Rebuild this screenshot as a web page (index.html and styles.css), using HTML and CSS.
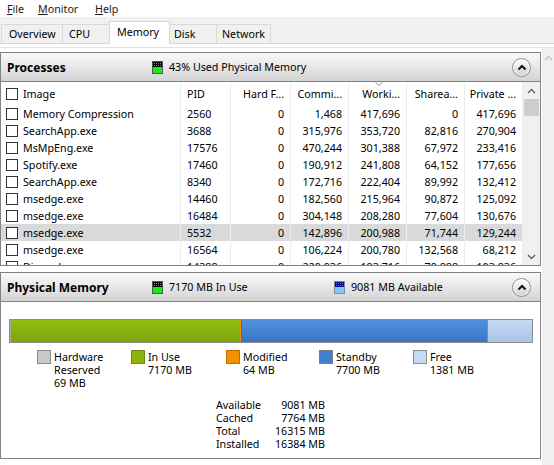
FILE: index.html
```html
<!DOCTYPE html>
<html>
<head>
<meta charset="utf-8">
<link rel="stylesheet" href="styles.css">
</head>
<body>
<div class="menubar">
  <span class="mi mi-file"><u>F</u>ile</span>
  <span class="mi mi-mon"><u>M</u>onitor</span>
  <span class="mi"><u>H</u>elp</span>
</div>
<div class="tabstrip">
  <div class="tab t-ov">Overview</div>
  <div class="tab t-cpu">CPU</div>
  <div class="tab t-mem sel">Memory</div>
  <div class="tab t-disk">Disk</div>
  <div class="tab t-net">Network</div>
</div>
<div class="main">
  <div class="frame">
    <div class="pane">
      <section class="panel">
        <header class="phead">
          <div class="ptitle">Processes</div>
          <svg class="icon" width="11" height="13" viewBox="0 0 11 13">
            <rect x="0" y="0" width="11" height="13" fill="#555"/>
            <rect x="1" y="1" width="9" height="5" fill="#000"/>
            <g fill="#19c819">
              <rect x="2" y="2" width="1" height="1"/><rect x="4" y="2" width="1" height="1"/><rect x="6" y="2" width="1" height="1"/><rect x="8" y="2" width="1" height="1"/>
              <rect x="2" y="4" width="1" height="1"/><rect x="4" y="4" width="1" height="1"/><rect x="6" y="4" width="1" height="1"/><rect x="8" y="4" width="1" height="1"/>
            </g>
            <rect x="1" y="6" width="9" height="6" fill="#1ee81e"/>
          </svg>
          <span class="hlabel">43% Used Physical Memory</span>
          <span class="collapse"><svg width="10" height="7" viewBox="0 0 10 7"><polyline points="1.5,5.5 5,2 8.5,5.5" fill="none" stroke="#111" stroke-width="2"/></svg></span>
        </header>
        <div class="tablewrap">
          <div class="table">
            <div class="hrow">
              <div class="c img"><span class="cb"></span>Image</div>
              <div class="c pid">PID</div>
              <div class="c num">Hard F...</div>
              <div class="c num">Commi...</div>
              <div class="c num sorted">Worki...<svg class="sortarrow" width="8" height="4" viewBox="0 0 8 4"><polyline points="0.5,0.5 4,3.5 7.5,0.5" fill="none" stroke="#9a9a9a" stroke-width="1"/></svg></div>
              <div class="c num">Sharea...</div>
              <div class="c num">Private ...</div>
            </div>
            <div class="rows">
              <div class="prow"><div class="c img"><span class="cb"></span>Memory Compression</div><div class="c pid">2560</div><div class="c num">0</div><div class="c num">1,468</div><div class="c num">417,696</div><div class="c num">0</div><div class="c num">417,696</div></div>
              <div class="prow"><div class="c img"><span class="cb"></span>SearchApp.exe</div><div class="c pid">3688</div><div class="c num">0</div><div class="c num">315,976</div><div class="c num">353,720</div><div class="c num">82,816</div><div class="c num">270,904</div></div>
              <div class="prow"><div class="c img"><span class="cb"></span>MsMpEng.exe</div><div class="c pid">17576</div><div class="c num">0</div><div class="c num">470,244</div><div class="c num">301,388</div><div class="c num">67,972</div><div class="c num">233,416</div></div>
              <div class="prow"><div class="c img"><span class="cb"></span>Spotify.exe</div><div class="c pid">17460</div><div class="c num">0</div><div class="c num">190,912</div><div class="c num">241,808</div><div class="c num">64,152</div><div class="c num">177,656</div></div>
              <div class="prow"><div class="c img"><span class="cb"></span>SearchApp.exe</div><div class="c pid">8340</div><div class="c num">0</div><div class="c num">172,716</div><div class="c num">222,404</div><div class="c num">89,992</div><div class="c num">132,412</div></div>
              <div class="prow"><div class="c img"><span class="cb"></span>msedge.exe</div><div class="c pid">14460</div><div class="c num">0</div><div class="c num">182,560</div><div class="c num">215,964</div><div class="c num">90,872</div><div class="c num">125,092</div></div>
              <div class="prow"><div class="c img"><span class="cb"></span>msedge.exe</div><div class="c pid">16484</div><div class="c num">0</div><div class="c num">304,148</div><div class="c num">208,280</div><div class="c num">77,604</div><div class="c num">130,676</div></div>
              <div class="prow hl"><div class="c img"><span class="cb"></span>msedge.exe</div><div class="c pid">5532</div><div class="c num">0</div><div class="c num">142,896</div><div class="c num">200,988</div><div class="c num">71,744</div><div class="c num">129,244</div></div>
              <div class="prow"><div class="c img"><span class="cb"></span>msedge.exe</div><div class="c pid">16564</div><div class="c num">0</div><div class="c num">106,224</div><div class="c num">200,780</div><div class="c num">132,568</div><div class="c num">68,212</div></div>
              <div class="prow"><div class="c img"><span class="cb"></span>Discord.exe</div><div class="c pid">14388</div><div class="c num">0</div><div class="c num">229,936</div><div class="c num">193,716</div><div class="c num">79,888</div><div class="c num">103,836</div></div>
            </div>
          </div>
          <div class="vscroll">
            <div class="arrowbox"><svg width="9" height="6" viewBox="0 0 9 6"><polyline points="1,5 4.5,1.5 8,5" fill="none" stroke="#606060" stroke-width="1.4"/></svg></div>
            <div class="thumb"></div>
            <div class="track"></div>
            <div class="arrowbox"><svg width="9" height="6" viewBox="0 0 9 6"><polyline points="1,1 4.5,4.5 8,1" fill="none" stroke="#606060" stroke-width="1.4"/></svg></div>
          </div>
        </div>
      </section>

      <section class="panel phys">
        <header class="phead">
          <div class="ptitle">Physical Memory</div>
          <div class="hgroup">
            <svg class="icon" width="11" height="13" viewBox="0 0 11 13">
              <rect x="0" y="0" width="11" height="13" fill="#555"/>
              <rect x="1" y="1" width="9" height="5" fill="#000"/>
              <g fill="#19c819">
                <rect x="2" y="2" width="1" height="1"/><rect x="4" y="2" width="1" height="1"/><rect x="6" y="2" width="1" height="1"/><rect x="8" y="2" width="1" height="1"/>
                <rect x="2" y="4" width="1" height="1"/><rect x="4" y="4" width="1" height="1"/><rect x="6" y="4" width="1" height="1"/><rect x="8" y="4" width="1" height="1"/>
              </g>
              <rect x="1" y="6" width="9" height="6" fill="#1ee81e"/>
            </svg>
            <span class="hlabel">7170 MB In Use</span>
          </div>
          <svg class="icon" width="11" height="13" viewBox="0 0 11 13">
            <rect x="0" y="0" width="11" height="13" fill="#7a8ea8"/>
            <rect x="1" y="1" width="9" height="5" fill="#000a8c"/>
            <g fill="#4f7cf0">
              <rect x="2" y="2" width="1" height="1"/><rect x="4" y="2" width="1" height="1"/><rect x="6" y="2" width="1" height="1"/><rect x="8" y="2" width="1" height="1"/>
              <rect x="2" y="4" width="1" height="1"/><rect x="4" y="4" width="1" height="1"/><rect x="6" y="4" width="1" height="1"/><rect x="8" y="4" width="1" height="1"/>
            </g>
            <rect x="1" y="6" width="9" height="6" fill="#8cc2ff"/>
          </svg>
          <span class="hlabel">9081 MB Available</span>
          <span class="collapse"><svg width="10" height="7" viewBox="0 0 10 7"><polyline points="1.5,5.5 5,2 8.5,5.5" fill="none" stroke="#111" stroke-width="2"/></svg></span>
        </header>
        <div class="pbody">
          <div class="bar">
            <div class="seg s-hw" style="width:1px"></div>
            <div class="seg s-use" style="width:229px"></div>
            <div class="seg s-mod" style="width:1px"></div>
            <div class="seg s-stb" style="width:246px"></div>
            <div class="seg s-free" style="width:45px"></div>
          </div>
          <div class="legend">
            <div class="li"><span class="sw sw-hw"></span><div>Hardware<br>Reserved<br>69 MB</div></div>
            <div class="li"><span class="sw sw-use"></span><div>In Use<br>7170 MB</div></div>
            <div class="li"><span class="sw sw-mod"></span><div>Modified<br>64 MB</div></div>
            <div class="li"><span class="sw sw-stb"></span><div>Standby<br>7700 MB</div></div>
            <div class="li"><span class="sw sw-free"></span><div>Free<br>1381 MB</div></div>
          </div>
          <div class="summary">
            <span>Available</span><span class="v">9081 MB</span>
            <span>Cached</span><span class="v">7764 MB</span>
            <span>Total</span><span class="v">16315 MB</span>
            <span>Installed</span><span class="v">16384 MB</span>
          </div>
        </div>
      </section>
    </div>
    <div class="oscroll">
      <svg width="9" height="6" viewBox="0 0 9 6"><polyline points="1,5 4.5,1.5 8,5" fill="none" stroke="#c4c4c4" stroke-width="1.4"/></svg>
    </div>
  </div>
</div>
</body>
</html>
```
FILE: styles.css
```css
* { box-sizing: border-box; }
html, body { margin: 0; padding: 0; }
body {
  font-family: "Noto Sans", "Open Sans", sans-serif;
  font-size: 10.7px;
  color: #000;
  background: #fff;
  width: 554px;
  height: 465px;
  overflow: hidden;
}

/* menu */
.menubar {
  height: 17px;
  display: flex;
  align-items: center;
  padding-left: 7px;
  color: #1a1a1a;
}
.mi-file { width: 31px; }
.mi-mon { width: 57px; }
.mi u { text-decoration: underline; text-underline-offset: 1px; }

/* tabs */
.tabstrip {
  height: 27px;
  background: #f0f0f0;
  border-bottom: 1px solid #d9d9d9;
  display: flex;
  align-items: flex-end;
  padding-left: 1px;
}
.tab {
  height: 19px;
  border: 1px solid #d9d9d9;
  border-bottom: none;
  margin-right: -1px;
  padding-left: 7px;
  line-height: 18px;
  white-space: nowrap;
}
.t-ov { width: 62px; }
.t-cpu { width: 48px; padding-left: 6px; }
.t-mem { width: 61px; }
.t-disk { width: 48px; padding-left: 4px; border-left-color: transparent; }
.t-net { width: 55px; padding-left: 5px; }
.tab.sel {
  height: 23px;
  background: #fff;
  margin-bottom: -1px;
  line-height: 20px;
}

/* main frame */
.main { padding-top: 3px; }
.frame {
  border-top: 1px solid #e2e2e2;
  display: flex;
  height: 418px;
}
.pane { width: 542px; padding-top: 4px; }
.oscroll {
  flex: 1;
  background: #f0f0f0;
  display: flex;
  justify-content: center;
  padding-top: 7px;
  align-items: flex-start;
}

/* panels */
.panel {
  width: 541px;
  border: 1px solid #828282;
}
.phys { margin-top: 6px; }
.phead {
  height: 29px;
  border-bottom: 1px solid #828282;
  background: linear-gradient(#f9f9f9, #e9e9e9 45%, #d3d3d3);
  display: flex;
  align-items: center;
  padding-left: 6px;
  padding-right: 9px;
}
.ptitle {
  width: 145px;
  font-weight: bold;
  font-size: 12px;
}
.icon { display: block; flex: none; }
.hlabel { margin-left: 6px; white-space: nowrap; }
.hgroup { width: 182px; display: flex; align-items: center; }
.collapse {
  margin-left: auto;
  width: 19px;
  height: 19px;
  border-radius: 50%;
  border: 1px solid #8f8f8f;
  background: linear-gradient(#ffffff, #e4e4e4 60%, #cfcfcf);
  display: flex;
  align-items: center;
  justify-content: center;
  box-shadow: inset 0 0 0 1px rgba(255,255,255,0.7);
}

/* table */
.tablewrap { display: flex; }
.table { width: 522px; }
.hrow, .prow {
  display: grid;
  grid-template-columns: 180px 50px 60px 58px 58px 58px 58px;
  align-items: stretch;
}
.hrow { height: 23px; }
.prow { height: 17px; }
.rows { height: 160px; overflow: hidden; }
.prow.hl { background: #d9d9d9; }
.c {
  border-right: 1px solid #ececec;
  display: flex;
  align-items: center;
  white-space: nowrap;
  overflow: hidden;
  padding: 0 6px;
}
.c.img { padding-left: 5px; }
.c.num { justify-content: flex-end; }
.cb {
  width: 12px;
  height: 12px;
  border: 1px solid #333;
  background: #fff;
  margin-right: 5px;
  flex: none;
}
.sorted { position: relative; }
.sortarrow { position: absolute; left: 26px; top: 0; }

/* scrollbar */
.vscroll {
  width: 17px;
  display: flex;
  flex-direction: column;
  background: #f0f0f0;
}
.arrowbox {
  height: 17px;
  display: flex;
  align-items: center;
  justify-content: center;
  flex: none;
}
.thumb {
  height: 17px;
  margin: 0 1px;
  background: #cdcdcd;
  flex: none;
}
.track { flex: 1; }

/* physical memory body */
.pbody { height: 156px; padding-top: 17px; padding-left: 8px; }
.bar {
  width: 524px;
  height: 24px;
  border: 1px solid #8c8c8c;
  display: flex;
}
.seg { height: 100%; flex: none; }
.s-hw { background: #a8a8a8; }
.s-use { background: linear-gradient(#94be10, #7ea40b); }
.s-mod { background: #ef8a00; }
.s-stb { background: linear-gradient(#5091dc, #3a75c5); border-left: 1px solid #3a70b8; }
.s-free { background: linear-gradient(#c6daf2, #a9c4e7); border-left: 1px solid #8b8b8b; }

.legend {
  margin-top: 7px;
  margin-left: 28px;
  display: grid;
  grid-template-columns: 94px 95px 93px 94px auto;
  line-height: 13px;
}
.li { display: flex; align-items: flex-start; gap: 3px; padding-top: 1px; }
.li .sw { margin-top: -1px; }
.sw {
  width: 14px;
  height: 14px;
  flex: none;
  border: 1px solid #8c8c8c;
}
.sw-hw { background: #c8c8c8; }
.sw-use { background: #8cb40c; border-color: #6c8c0a; }
.sw-mod { background: #f29200; border-color: #c46a00; }
.sw-stb { background: #3f7fd0; border-color: #7d7d7d; }
.sw-free { background: #c7daf2; border-color: #8c8c8c; }

.summary {
  margin-top: 9px;
  margin-left: 207px;
  display: grid;
  grid-template-columns: 54px 55px;
  line-height: 13px;
  white-space: nowrap;
}
.summary .v { text-align: right; }
```
